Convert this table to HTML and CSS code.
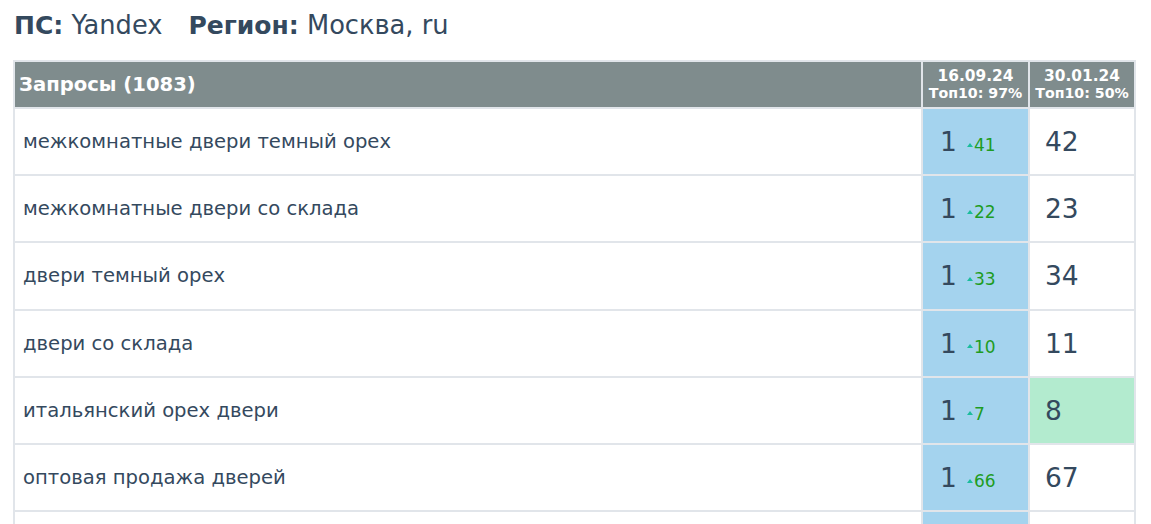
FILE: index.html
```html
<!DOCTYPE html>
<html lang="ru">
<head>
<meta charset="utf-8">
<link rel="stylesheet" href="styles.css">
</head>
<body>
<div class="page">
  <h1 class="title">
    <span class="pair"><b>ПС:</b> Yandex</span>
    <span class="pair"><b>Регион:</b> Москва, ru</span>
  </h1>
  <table class="positions">
    <thead>
      <tr>
        <th class="q-head">Запросы (1083)</th>
        <th class="date-head first"><div class="date">16.09.24</div><div class="top">Топ10: 97%</div></th>
        <th class="date-head second"><div class="date">30.01.24</div><div class="top">Топ10: 50%</div></th>
      </tr>
    </thead>
    <tbody>
      <tr>
        <td class="query">межкомнатные двери темный орех</td>
        <td class="pos cur"><span class="num">1</span><span class="delta"><span class="tri"></span>41</span></td>
        <td class="pos"><span class="num">42</span></td>
      </tr>
      <tr>
        <td class="query">межкомнатные двери со склада</td>
        <td class="pos cur"><span class="num">1</span><span class="delta"><span class="tri"></span>22</span></td>
        <td class="pos"><span class="num">23</span></td>
      </tr>
      <tr>
        <td class="query">двери темный орех</td>
        <td class="pos cur"><span class="num">1</span><span class="delta"><span class="tri"></span>33</span></td>
        <td class="pos"><span class="num">34</span></td>
      </tr>
      <tr>
        <td class="query">двери со склада</td>
        <td class="pos cur"><span class="num">1</span><span class="delta"><span class="tri"></span>10</span></td>
        <td class="pos"><span class="num">11</span></td>
      </tr>
      <tr>
        <td class="query">итальянский орех двери</td>
        <td class="pos cur"><span class="num">1</span><span class="delta"><span class="tri"></span>7</span></td>
        <td class="pos top10"><span class="num">8</span></td>
      </tr>
      <tr>
        <td class="query">оптовая продажа дверей</td>
        <td class="pos cur"><span class="num">1</span><span class="delta"><span class="tri"></span>66</span></td>
        <td class="pos"><span class="num">67</span></td>
      </tr>
      <tr>
        <td class="query">&nbsp;</td>
        <td class="pos cur"><span class="num">&nbsp;</span></td>
        <td class="pos"><span class="num">&nbsp;</span></td>
      </tr>
    </tbody>
  </table>
</div>
</body>
</html>
```

FILE: styles.css
```css
html, body {
  margin: 0;
  padding: 0;
  background: #ffffff;
  overflow: hidden;
}
body {
  font-family: "DejaVu Sans", Verdana, sans-serif;
  color: #34495e;
}
.page {
  padding: 11px 15px 0 13px;
}
.title {
  margin: 0 0 20px 1px;
  font-size: 25.7px;
  font-weight: normal;
  line-height: 29px;
  display: flex;
  gap: 26px;
}
.title b {
  font-weight: bold;
  font-size: 25px;
}
.positions {
  width: 100%;
  border-collapse: collapse;
  border: 2px solid #e1e5ea;
}
.positions th,
.positions td {
  border: 2px solid #e1e5ea;
}
.positions th {
  background: #7f8c8d;
  color: #ffffff;
  font-weight: bold;
  height: 45px;
  padding: 0;
}
.q-head {
  text-align: left;
  font-size: 19.6px;
  padding-left: 4px !important;
}
.date-head {
  text-align: center;
  vertical-align: middle;
}
.date-head.first {
  width: 105px;
}
.date-head.second {
  width: 104px;
}
.date {
  font-size: 15.4px;
  line-height: 18px;
}
.top {
  font-size: 14.2px;
  line-height: 17px;
}
.positions td {
  height: 65.2px;
  padding: 0;
  vertical-align: middle;
}
.query {
  font-size: 19.6px;
  padding-left: 8px !important;
}
.pos {
  padding-left: 15px !important;
}
.pos.cur {
  padding-left: 17px !important;
}
.cur {
  background: #a4d3ee;
}
.top10 {
  background: #b3ebcf;
}
.num {
  font-size: 26.5px;
}
.delta {
  margin-left: 10px;
  font-size: 17px;
  color: #1e9c22;
}
.tri {
  display: inline-block;
  vertical-align: middle;
  width: 0;
  height: 0;
  border-left: 3.5px solid transparent;
  border-right: 3.5px solid transparent;
  border-bottom: 4px solid #1abc9c;
  margin: -3px 1px 0 0;
}
```
